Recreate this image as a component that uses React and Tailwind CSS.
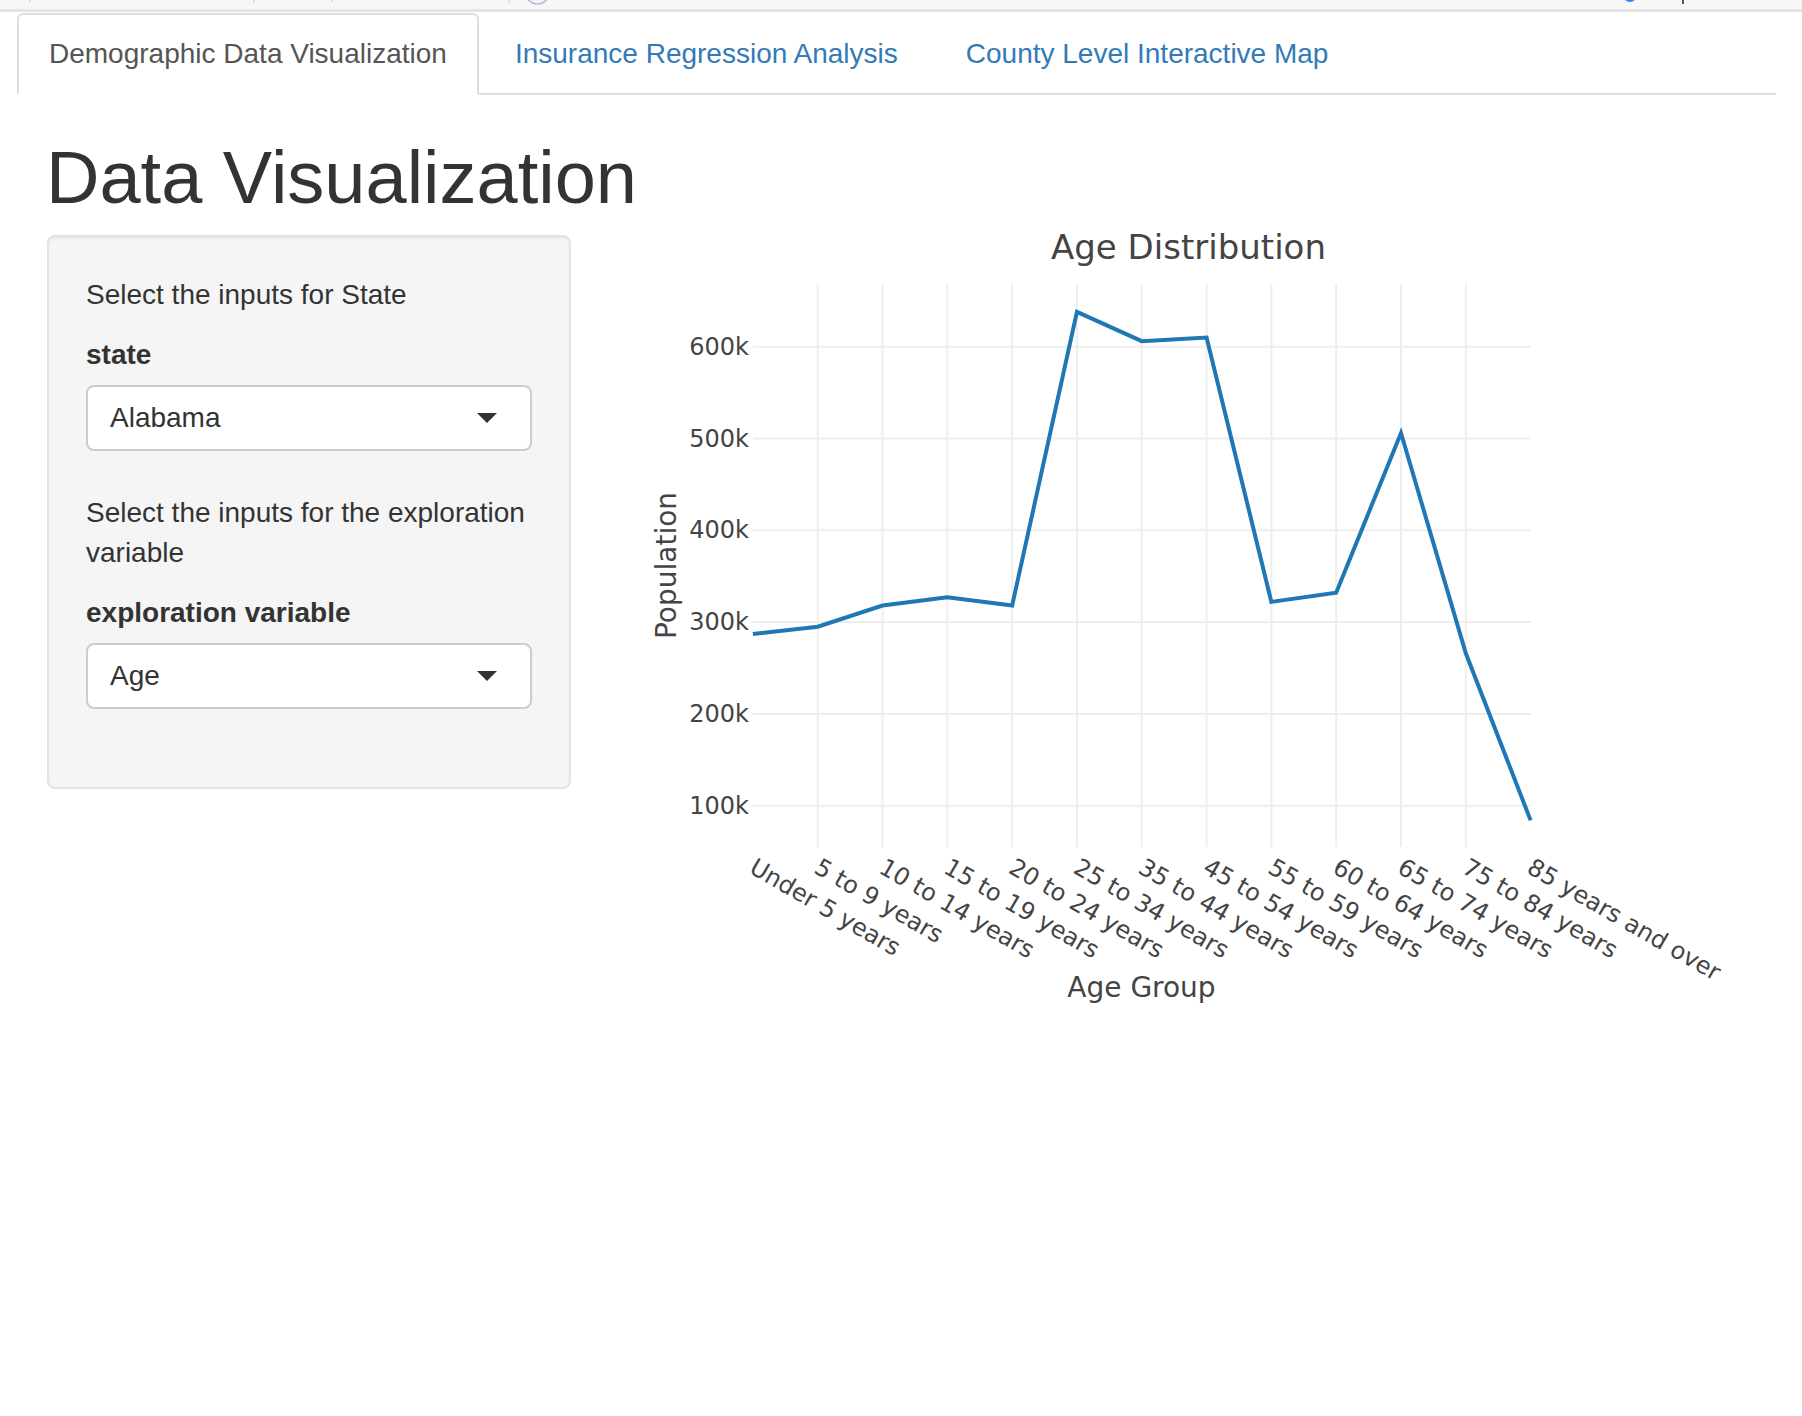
import React from "react";

const ageGroups = [
  "Under 5 years",
  "5 to 9 years",
  "10 to 14 years",
  "15 to 19 years",
  "20 to 24 years",
  "25 to 34 years",
  "35 to 44 years",
  "45 to 54 years",
  "55 to 59 years",
  "60 to 64 years",
  "65 to 74 years",
  "75 to 84 years",
  "85 years and over",
];

const population = [
  287000, 295000, 318000, 327000, 318000, 638000, 606000, 610000, 322000,
  332000, 506000, 266000, 84000,
];

// plot area in page pixels
const X0 = 752.9;
const DX = 64.81;
const PLOT_TOP = 284;
const PLOT_BOTTOM = 847;
const PLOT_RIGHT = X0 + DX * 12;

const xOf = (i) => X0 + i * DX;
const yOf = (v) => 346.7 + ((600000 - v) / 100000) * 91.8;

function AgeChart() {
  const points = population.map((v, i) => `${xOf(i)},${yOf(v)}`).join(" ");
  const ticks = [600000, 500000, 400000, 300000, 200000, 100000];

  return (
    <svg
      width="1164"
      height="800"
      viewBox="636 225 1164 800"
      className="ml-[65px] shrink-0 overflow-visible"
      style={{ fontFamily: '"DejaVu Sans", Verdana, sans-serif' }}
    >
      {/* grid */}
      {ticks.map((t) => (
        <line
          key={t}
          x1={X0}
          x2={PLOT_RIGHT}
          y1={yOf(t)}
          y2={yOf(t)}
          stroke="#eeeeee"
          strokeWidth="2"
        />
      ))}
      {ageGroups.slice(1, 12).map((g, k) => (
        <line
          key={g}
          x1={xOf(k + 1)}
          x2={xOf(k + 1)}
          y1={PLOT_TOP}
          y2={PLOT_BOTTOM}
          stroke="#eeeeee"
          strokeWidth="2"
        />
      ))}

      <polyline
        points={points}
        fill="none"
        stroke="#1f77b4"
        strokeWidth="4"
        strokeLinejoin="miter"
      />

      {/* title */}
      <text x="1188.5" y="259" textAnchor="middle" fontSize="34" fill="#444444">
        Age Distribution
      </text>

      {/* y ticks */}
      {ticks.map((t) => (
        <text
          key={t}
          x="749"
          y={yOf(t) + 8}
          textAnchor="end"
          fontSize="24"
          fill="#444444"
        >
          {t / 1000}k
        </text>
      ))}

      {/* x ticks */}
      {ageGroups.map((g, i) => {
        const ax = xOf(i) - 5;
        const ay = 872;
        return (
          <text
            key={g}
            x={ax}
            y={ay}
            fontSize="24"
            fill="#444444"
            transform={`rotate(30 ${ax} ${ay})`}
          >
            {g}
          </text>
        );
      })}

      <text
        x="676"
        y="565.5"
        textAnchor="middle"
        fontSize="28"
        fill="#444444"
        transform="rotate(-90 676 565.5)"
      >
        Population
      </text>
      <text x="1141.5" y="997" textAnchor="middle" fontSize="28" fill="#444444">
        Age Group
      </text>
    </svg>
  );
}

function SelectBox({ value }) {
  return (
    <div className="flex h-[66px] w-full items-center justify-between rounded-[8px] border-2 border-[#cccccc] bg-white pl-[22px] pr-[33px] text-[28px] text-[#333333]">
      <span>{value}</span>
      <span className="h-0 w-0 border-x-[10px] border-t-[10px] border-x-transparent border-t-[#333333]" />
    </div>
  );
}

export default function App() {
  return (
    <div
      className="min-h-[1416px] w-[1802px] bg-white text-[#333333]"
      style={{ fontFamily: '"Liberation Sans", Arial, sans-serif' }}
    >
      {/* leftover browser strip */}
      <div className="h-[12px] border-b-[3px] border-[#e4e4e6] bg-[#f7f7f8]">
        <svg width="1802" height="9" className="block">
          <line x1="30" x2="30" y1="0" y2="2" stroke="#c8c8c8" />
          <line x1="254" x2="254" y1="0" y2="3" stroke="#c8c8c8" />
          <line x1="332" x2="332" y1="0" y2="2" stroke="#c8c8c8" />
          <line x1="509" x2="509" y1="0" y2="3" stroke="#c8c8c8" />
          <circle cx="537.5" cy="-8" r="12" fill="#eef0fa" stroke="#a9b0c8" strokeWidth="1.2" />
          <circle cx="1630" cy="-5" r="7" fill="#1a8cff" />
          <line x1="1683" x2="1683" y1="0" y2="4" stroke="#222222" strokeWidth="1.5" />
        </svg>
      </div>

      {/* tabs */}
      <ul className="ml-[17px] mt-[1px] flex w-[1759px] border-b-2 border-[#dddddd] text-[28px]">
        <li className="-mb-[2px] mr-[4px]">
          <a className="flex h-[82px] items-center rounded-t-[6px] border-2 border-[#dddddd] border-b-white bg-white px-[30px] text-[#555555]">
            Demographic Data Visualization
          </a>
        </li>
        <li className="-mb-[2px] mr-[4px]">
          <a className="flex h-[82px] items-center border-2 border-transparent px-[30px] text-[#337ab7]">
            Insurance Regression Analysis
          </a>
        </li>
        <li className="-mb-[2px] mr-[4px]">
          <a className="flex h-[82px] items-center border-2 border-transparent px-[30px] text-[#337ab7]">
            County Level Interactive Map
          </a>
        </li>
      </ul>

      <h2 className="ml-[46px] mt-[43px] text-[74px] font-normal leading-[79px] text-[#333333]">
        Data Visualization
      </h2>

      <div className="mt-[8px] flex items-start pl-[47px]">
        {/* sidebar */}
        <div className="mt-[10px] w-[524px] shrink-0 rounded-[8px] border-2 border-[#e3e3e3] bg-[#f5f5f5] px-[37px] pb-[78px] pt-[38px] text-[28px] leading-[40px] shadow-[inset_0_2px_2px_rgba(0,0,0,0.05)]">
          <p className="mb-[20px]">Select the inputs for State</p>
          <label className="mb-[10px] block font-bold">state</label>
          <SelectBox value="Alabama" />
          <p className="mb-[20px] mt-[42px]">
            Select the inputs for the exploration variable
          </p>
          <label className="mb-[10px] block font-bold">exploration variable</label>
          <SelectBox value="Age" />
        </div>

        <AgeChart />
      </div>
    </div>
  );
}
